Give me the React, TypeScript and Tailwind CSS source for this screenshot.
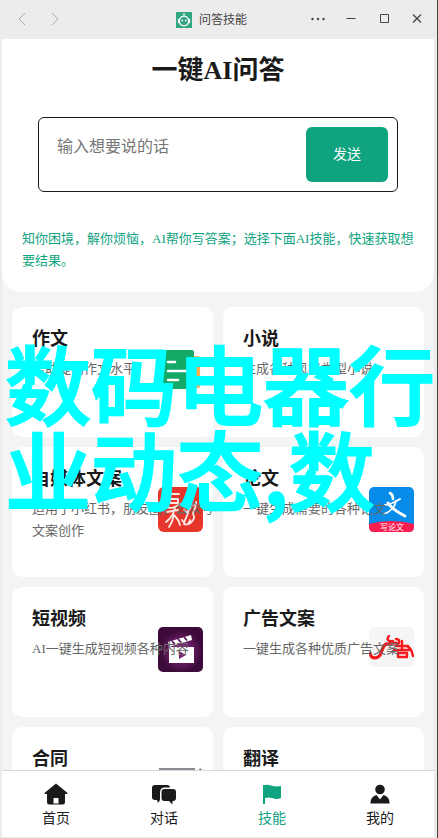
import { FC, ReactNode } from 'react';

const TILE = 'absolute right-2.5 top-10 w-[45px]';

const EssayIcon: FC = () => (
  <svg className={TILE} viewBox="0 0 45 45" aria-hidden="true">
    <rect width="45" height="45" rx="5" fill="#fdfdfd" />
    <rect x="22" y="9" width="20" height="32" rx="2" fill="#ffab4b" />
    <rect x="3" y="3" width="33" height="39" rx="2" fill="#14a966" />
    <path d="M10 15h7M10 24h20M10 33h10" stroke="#fff" strokeWidth="2.6" strokeLinecap="round" />
  </svg>
);

const MediaIcon: FC = () => (
  <svg className={TILE} viewBox="0 0 45 45" aria-hidden="true">
    <rect width="45" height="45" rx="6" fill="#e6352a" />
    <g fill="none" stroke="#fbe9e6" strokeWidth="1.8" strokeLinecap="round" strokeLinejoin="round">
      <path d="M13 7h8M12 12h8v4h-8zM8 20c5 2 10 0 14-3M9 25l11-2M17 20c-1 8-5 12-9 15M16 28c-1 5-3 9-5 12M17 29c2 2 4 5 5 9" />
      <path d="M27 14c3 1 5 0 7-1M33 13c1 3-1 6-4 8M26 23l3 3c2-4 5-8 8-9M38 15c1 5-3 8-3 12 3 4-1 8-4 10M30 26c-1 4-4 7-4 11 3 2 5-1 6-4M24 33l3 4" />
    </g>
  </svg>
);

const ThesisIcon: FC = () => (
  <svg className={TILE} viewBox="0 0 45 45" aria-hidden="true">
    <rect width="45" height="45" rx="5" fill="#078ce9" />
    <path d="M0 37q22-6 45 0v3q0 5-5 5H5q-5 0-5-5z" fill="#fb1c50" />
    <g fill="none" stroke="#fff" strokeLinecap="round" strokeLinejoin="round">
      <path d="M21 6c2 1 3 3 3 6" strokeWidth="2.600" />
      <path d="M16 18c5 0 10-3 15-6" strokeWidth="2" />
      <path d="M27 14c-1 6-6 11-12 13" strokeWidth="1.800" />
      <path d="M19 16c4 6 9 9 17 13" strokeWidth="2.800" />
    </g>
    <text x="23" y="43" textAnchor="middle" fill="#fff" fontSize="8" fontFamily="Noto Sans CJK SC, sans-serif">写论文</text>
  </svg>
);

const VideoIcon: FC = () => (
  <svg className={TILE} viewBox="0 0 45 45" aria-hidden="true">
    <defs>
      <radialGradient id="glow">
        <stop offset="0" stopColor="#8f2b91" />
        <stop offset="0.6" stopColor="#64195f" />
        <stop offset="1" stopColor="#3c0b39" />
      </radialGradient>
    </defs>
    <rect width="45" height="45" rx="5" fill="#3c0b39" />
    <circle cx="23" cy="24" r="21" fill="url(#glow)" />
    <path d="M10 15l23-7 1 5-23 7z" fill="#fff" />
    <path d="M14 14l3 3.500M20 12l3 3.500M26 10l3 3.500" stroke="#5b175a" strokeWidth="1.800" />
    <path d="M11 20h25v16H11z" fill="#fff" />
    <path d="M21 24l7 4-7 4z" fill="#7a2178" />
  </svg>
);

const AdIcon: FC = () => (
  <svg className={TILE} viewBox="0 0 45 40" aria-hidden="true">
    <rect width="45" height="40" rx="5" fill="#f5f5f5" />
    <g fill="none" stroke="#f5191c" strokeLinecap="round" strokeLinejoin="round">
      <path d="M1 26c1 7 9 6 11 0 2-4 1-6 5-9" strokeWidth="3.200" />
      <path d="M14 19c3-2 8-3 13-3" strokeWidth="2.800" />
      <path d="M20 9c-3 3-1 6 4 5M27 12c3 0 4 2 3 4" strokeWidth="2.400" />
      <path d="M30 15l-3 4M28 19h11M33 14v9M25 23h15M29 26h9v4h-9z" strokeWidth="2.400" />
      <path d="M39 20c3 1 4 4 5 9" strokeWidth="2.400" />
    </g>
  </svg>
);

const ContractIcon: FC = () => (
  <svg className={TILE} viewBox="0 0 45 45" aria-hidden="true">
    <path d="M2 2h34v42H2z" fill="#f3f3f6" stroke="#8b8b93" strokeWidth="2" />
    <path d="M42 1L28 28l-2 7 6-4L45 4z" fill="#77777f" />
  </svg>
);

interface ISkill {
  title: string;
  text?: string;
  icon?: ReactNode;
}

const skills: ISkill[] = [
  { title: '作文', text: '帮助提高作文水平', icon: <EssayIcon /> },
  { title: '小说', text: '生成各种风格类型小说' },
  { title: '自媒体文案', text: '适用于小红书，朋友圈，公众号文案创作', icon: <MediaIcon /> },
  { title: '论文', text: '一键生成需要的各种论文', icon: <ThesisIcon /> },
  { title: '短视频', text: 'AI一键生成短视频各种内容', icon: <VideoIcon /> },
  { title: '广告文案', text: '一键生成各种优质广告文案', icon: <AdIcon /> },
  { title: '合同', icon: <ContractIcon /> },
  { title: '翻译' },
];

const tabs = [
  {
    label: '首页',
    icon: <path fillRule="evenodd" d="M12 .5l11.500 9.500v1H21v8q0 2.500-2.500 2.500h-13Q3 21.500 3 19v-8H.5v-1zM9.500 20.500h5V15h-5z" />,
  },
  {
    label: '对话',
    icon: (
      <>
        <path d="M3 2h12q3 0 3 2.500h-5q-5 0-5 5V17l-2 3-1-3H3q-3 0-3-3V5q0-3 3-3z" />
        <path d="M12.500 6H21q3 0 3 3v6q0 3-3 3h-.5v3.500L17 18h-4.500q-3 0-3-3V9q0-3 3-3z" />
      </>
    ),
  },
  {
    label: '技能',
    active: true,
    icon: <path d="M3 2h2c4-1 5 .5 8 1 3 .6 5 .5 8 0v12c-4 1.500-6 1-9 0-3-.8-5-.6-7 0v6H3z" />,
  },
  {
    label: '我的',
    icon: (
      <>
        <circle cx="12" cy="6.500" r="4.800" />
        <path d="M2.500 20.500c0-5 2-7 6-8.500l3.500 4.500 3.500-4.500c4 1.500 6 3.500 6 8.500z" />
      </>
    ),
  },
];

const TitleBar: FC = () => (
  <header className="flex h-[39px] shrink-0 items-center bg-[#ececec] px-1 text-[#444]">
    <button className="flex w-[33px] justify-center text-[#aaa]" aria-label="后退">
      <svg className="h-4 w-4" viewBox="0 0 16 16" fill="none" stroke="currentColor">
        <path d="M12 1L6 7l6 6" />
      </svg>
    </button>
    <button className="flex w-[33px] justify-center text-[#aaa]" aria-label="前进">
      <svg className="h-4 w-4" viewBox="0 0 16 16" fill="none" stroke="currentColor">
        <path d="M6 1l6 6-6 6" />
      </svg>
    </button>
    <div className="ml-auto mr-[54px] flex items-center gap-[7px]">
      <svg className="h-4 w-4" viewBox="0 0 16 16" aria-hidden="true">
        <rect width="16" height="16" fill="#32a583" />
        <circle cx="8" cy="2.500" r="1" fill="#fff" />
        <path d="M2.500 7v4M13.500 7v4" stroke="#fff" strokeWidth="1.200" />
        <circle cx="8" cy="9" r="4.800" fill="none" stroke="#fff" strokeWidth="1.300" />
        <circle cx="6.200" cy="8.500" r="0.900" fill="#fff" />
        <circle cx="9.800" cy="8.500" r="0.900" fill="#fff" />
      </svg>
      <span className="text-xs">问答技能</span>
    </div>
    <button className="flex w-[33px] justify-center" aria-label="更多">
      <svg className="h-4 w-4" viewBox="0 0 16 16" fill="currentColor">
        <circle cx="2.500" cy="7" r="1.200" />
        <circle cx="8" cy="7" r="1.200" />
        <circle cx="13.500" cy="7" r="1.200" />
      </svg>
    </button>
    <button className="flex w-[33px] justify-center" aria-label="最小化">
      <svg className="h-4 w-4" viewBox="0 0 16 16" stroke="currentColor">
        <path d="M3.500 6.500h9" />
      </svg>
    </button>
    <button className="flex w-[33px] justify-center" aria-label="最大化">
      <svg className="h-4 w-4" viewBox="0 0 16 16" fill="none" stroke="currentColor">
        <path d="M4.500 2.500h8v8h-8z" />
      </svg>
    </button>
    <button className="flex w-[33px] justify-center" aria-label="关闭">
      <svg className="h-4 w-4" viewBox="0 0 16 16" stroke="currentColor" strokeWidth="1.200">
        <path d="M4 2.500l8 8M12 2.500l-8 8" />
      </svg>
    </button>
  </header>
);

const AskPanel: FC = () => (
  <section className="rounded-b-[20px] bg-white px-5 pb-5 pt-3.5">
    <h1 className="text-center text-[26px] font-bold leading-9">一键AI问答</h1>
    <form className="mx-4 mt-7 flex rounded-md border border-[#1a1a1a] p-[9px]">
      <textarea
        className="h-[55px] min-w-0 flex-1 resize-none px-[9px] py-2 text-base placeholder:text-[#757575] focus:outline-none"
        placeholder="输入想要说的话"
        aria-label="输入想要说的话"
      />
      <button type="button" className="w-[82px] rounded-md bg-[#10a37f] text-sm text-white">
        发送
      </button>
    </form>
    <p className="mt-9 text-[13px] leading-[22px] text-[#10a37f]">
      知你困境，解你烦恼，AI帮你写答案；选择下面AI技能，快速获取想要结果。
    </p>
  </section>
);

const SkillCard: FC<ISkill> = ({ title, text, icon }) => (
  <article className="relative h-[130px] rounded-[10px] bg-white pl-5 pt-[18px]">
    {icon}
    <h2 className="text-lg font-bold leading-7">{title}</h2>
    <p className="relative -mr-1 mt-[5px] text-[13px] leading-[22px] text-[#666]">{text}</p>
  </article>
);

const TabBar: FC = () => (
  <nav className="grid shrink-0 grid-cols-4 border-t border-[#d8d8d8] bg-white pb-2 pt-3">
    {tabs.map(({ label, icon, active }) => (
      <a
        key={label}
        href={`#${label}`}
        className={`flex flex-col items-center gap-[2px] text-sm ${active ? 'text-[#10a37f]' : 'text-[#1a1a1a]'}`}
      >
        <svg className="h-6 w-6" viewBox="0 0 24 24" fill="currentColor" aria-hidden="true">
          {icon}
        </svg>
        <span>{label}</span>
      </a>
    ))}
  </nav>
);

const App: FC = () => {
  return (
    <div className="relative flex h-screen flex-col overflow-hidden border-r border-[#444] bg-[#ececec] font-['Liberation_Serif','Noto_Sans_CJK_SC',sans-serif] text-[#1a1a1a]">
      <TitleBar />
      <div className="ml-[2px] mr-[3px] mb-px flex min-h-0 flex-1 flex-col bg-[#f4f4f4]">
        <main className="min-h-0 flex-1 overflow-hidden">
          <AskPanel />
          <div className="grid grid-cols-2 gap-[10px] px-[10px] pt-[15px]">
            {skills.map((skill) => (
              <SkillCard key={skill.title} {...skill} />
            ))}
          </div>
        </main>
        <TabBar />
      </div>
      <div className="pointer-events-none absolute left-[5px] top-[339px] whitespace-nowrap font-['Noto_Sans_CJK_SC',sans-serif] text-[86px] font-medium leading-[86px] text-[#00ffff] [-webkit-text-stroke:2px_#00ffff]">
        <div>数码电器行</div>
        <div>业动态,数</div>
      </div>
    </div>
  );
};

export default App;
